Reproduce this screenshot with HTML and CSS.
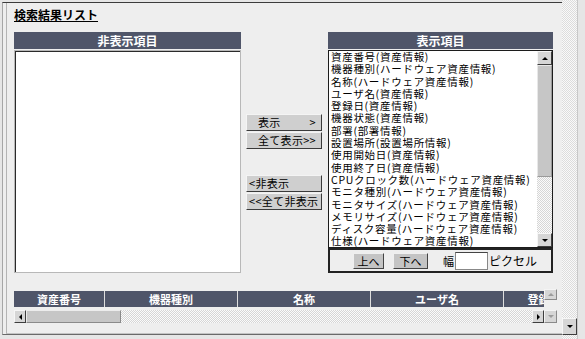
FILE: index.html
```html
<!DOCTYPE html>
<html>
    <head>
        <meta charset="utf-8">
        <title>検索結果リスト</title>
        <link rel="stylesheet" href="styles.css">
    </head>
    <body>
        <div class="page">
            <div class="frame">
                <div class="inner">
                    <h1 class="title">検索結果リスト</h1>
                    <div class="picker">
                        <div class="panel panel-left">
                            <div class="panel-head">非表示項目</div>
                            <div class="listbox listbox-hidden"></div>
                        </div>
                        <div class="moves">
                            <div class="btn-group">
                                <div class="btn btn-show"><span>表示</span><span>&gt;</span></div>
                                <div class="btn btn-show-all">全て表示&gt;&gt;</div>
                            </div>
                            <div class="btn-group">
                                <div class="btn btn-hide">&lt;非表示</div>
                                <div class="btn btn-hide">&lt;&lt;全て非表示</div>
                            </div>
                        </div>
                        <div class="panel panel-right">
                            <div class="panel-head">表示項目</div>
                            <div class="listbox listbox-shown">
                                <ul class="items">
                                    <li>資産番号(資産情報)</li>
                                    <li>機器種別(ハードウェア資産情報)</li>
                                    <li>名称(ハードウェア資産情報)</li>
                                    <li>ユーザ名(資産情報)</li>
                                    <li>登録日(資産情報)</li>
                                    <li>機器状態(資産情報)</li>
                                    <li>部署(部署情報)</li>
                                    <li>設置場所(設置場所情報)</li>
                                    <li>使用開始日(資産情報)</li>
                                    <li>使用終了日(資産情報)</li>
                                    <li>CPUクロック数(ハードウェア資産情報)</li>
                                    <li>モニタ種別(ハードウェア資産情報)</li>
                                    <li>モニタサイズ(ハードウェア資産情報)</li>
                                    <li>メモリサイズ(ハードウェア資産情報)</li>
                                    <li>ディスク容量(ハードウェア資産情報)</li>
                                    <li>仕様(ハードウェア資産情報)</li>
                                </ul>
                                <div class="vscroll">
                                    <div class="sb-btn"><i class="tri tri-up"></i></div>
                                    <div class="sb-thumb"></div>
                                    <div class="sb-track"></div>
                                    <div class="sb-btn"><i class="tri tri-down"></i></div>
                                </div>
                            </div>
                            <div class="order-bar">
                                <div class="small-btn btn-up">上へ</div>
                                <div class="small-btn btn-down">下へ</div>
                                <label class="width-label">幅</label>
                                <input type="text" class="width-input">
                                <span class="unit">ピクセル</span>
                            </div>
                        </div>
                    </div>
                    <div class="grid">
                        <div class="grid-main">
                            <div class="grid-head">
                                <div class="cell c1">資産番号</div>
                                <div class="cell c2">機器種別</div>
                                <div class="cell c3">名称</div>
                                <div class="cell c4">ユーザ名</div>
                                <div class="cell c5">登録日</div>
                            </div>
                            <div class="hscroll">
                                <div class="sb-btn sb-h"><i class="tri tri-left"></i></div>
                                <div class="sb-thumb-h"></div>
                                <div class="sb-track"></div>
                                <div class="sb-btn sb-h"><i class="tri tri-right"></i></div>
                            </div>
                        </div>
                        <div class="grid-vscroll">
                            <div class="sb-btn sb-off sb-up-small"><i class="tri tri-up"></i></div>
                            <div class="sb-btn sb-off sb-down-small"><i class="tri tri-down"></i></div>
                        </div>
                    </div>
                </div>
            </div>
            <div class="page-vscroll">
                <div class="sb-btn page-down"><i class="tri tri-down"></i></div>
            </div>
        </div>
    </body>
</html>
```

FILE: styles.css
```css
*{
    margin: 0;
    padding: 0;
    box-sizing: border-box;
}
body{
    background: #e6e6e6;
    font-family: "Noto Sans CJK JP", sans-serif;
    font-size: 11px;
    color: #000;
    overflow: hidden;
}
.page{
    display: flex;
    height: 339px;
}
.frame{
    width: 560px;
    height: 333px;
    margin: 2px 0 0 2px;
    padding-left: 3px;
    background: #eeeeee;
    border-top: 1px solid #3c3c3c;
    border-left: 1px solid #a6a6a6;
    border-bottom: 1px solid #6a6a6a;
}
.inner{
    height: 100%;
    padding: 5px 0 0 7px;
    border-left: 1px solid #b4b4b4;
    border-bottom: 1px solid #c4c4c4;
}
.title{
    font-size: 12px;
    font-weight: bold;
    line-height: 14px;
    text-decoration: underline;
}

/* 項目選択 */
.picker{
    display: flex;
    margin-top: 10px;
    height: 241px;
}
.panel-left{
    width: 227px;
}
.panel-right{
    width: 225px;
}
.panel-head{
    height: 17px;
    line-height: 17px;
    text-align: center;
    background: #4f5569;
    color: #fff;
    font-size: 12px;
    font-weight: bold;
}
.listbox{
    margin-top: 1px;
    background: #fff;
}
.listbox-hidden{
    height: 223px;
    border: 1px solid #b8b8b8;
    box-shadow: inset 1px 1px 0 #2a2a2a;
}
.listbox-shown{
    height: 198px;
    border: 1px solid #1c1c1c;
    display: flex;
}
.items{
    flex: 1;
    list-style: none;
    padding-left: 2px;
    font-size: 10.5px;
    line-height: 12.3px;
    letter-spacing: 0.7px;
    white-space: nowrap;
}
.vscroll{
    width: 15px;
    display: flex;
    flex-direction: column;
}
.sb-btn{
    display: flex;
    align-items: center;
    justify-content: center;
    width: 15px;
    height: 14px;
    background: #d6d6d6;
    border: 1px solid;
    border-color: #f6f6f6 #3e3e3e #3e3e3e #f6f6f6;
}
.sb-thumb{
    height: 112px;
    background: #c6c6c6;
    border: 1px solid;
    border-color: #e8e8e8 #9a9a9a #9a9a9a #e8e8e8;
}
.sb-track{
    flex: 1;
    background-image: repeating-conic-gradient(#fbfbfb 0 25%, #d6d6d6 0 50%);
    background-size: 2px 2px;
}
.tri{
    display: block;
    width: 0;
    height: 0;
}
.tri-up{
    border-left: 3px solid transparent;
    border-right: 3px solid transparent;
    border-bottom: 3px solid #000;
}
.tri-down{
    border-left: 3px solid transparent;
    border-right: 3px solid transparent;
    border-top: 3px solid #000;
}
.tri-left{
    border-top: 3px solid transparent;
    border-bottom: 3px solid transparent;
    border-right: 3px solid #000;
}
.tri-right{
    border-top: 3px solid transparent;
    border-bottom: 3px solid transparent;
    border-left: 3px solid #000;
}
.sb-off .tri-up{
    border-bottom-color: #9c9c9c;
}
.sb-off .tri-down{
    border-top-color: #9c9c9c;
}

/* 移動ボタン */
.moves{
    width: 87px;
    padding: 82px 0 0 5px;
}
.btn{
    width: 76px;
    height: 17px;
    line-height: 15px;
    background: #cfcfcf;
    border: 1px solid;
    border-color: #f4f4f4 #3a3a3a #3a3a3a #f4f4f4;
    white-space: nowrap;
    letter-spacing: 0.3px;
}
.btn + .btn{
    margin-top: 1px;
}
.btn-group + .btn-group{
    margin-top: 26px;
}
.btn-show{
    display: flex;
    justify-content: space-between;
    padding: 0 5px 0 11px;
}
.btn-show-all{
    padding-left: 11px;
}
.btn-hide{
    padding-left: 2px;
}

/* 並び替え */
.order-bar{
    height: 25px;
    border: 2px solid #222;
    display: flex;
    align-items: center;
    padding-left: 23px;
}
.small-btn{
    height: 16px;
    line-height: 14px;
    text-align: center;
    background: #c4c4c4;
    border: 1px solid;
    border-color: #efefef #444 #444 #efefef;
}
.btn-up{
    width: 31px;
}
.btn-down{
    width: 35px;
    margin-left: 9px;
}
.width-label{
    margin-left: 15px;
}
.width-input{
    width: 33px;
    height: 18px;
    margin-left: 1px;
    border: 1px solid #888;
    border-top-color: #444;
    background: #fff;
}
.unit{
    margin-left: 1px;
    font-size: 12px;
}

/* 一覧 */
.grid{
    display: flex;
    margin-top: 18px;
}
.grid-main{
    width: 530px;
}
.grid-head{
    display: flex;
    gap: 1px;
    height: 16px;
    overflow: hidden;
    background: #dedede;
}
.cell{
    flex: none;
    line-height: 16px;
    text-align: center;
    background: #4f5569;
    color: #fff;
    font-weight: bold;
    white-space: nowrap;
}
.c1{ width: 90px; }
.c2{ width: 132px; }
.c3{ width: 132px; }
.c4{ width: 132px; }
.c5{ width: 80px; }
.hscroll{
    display: flex;
    height: 13px;
    margin-top: 3px;
}
.sb-h{
    width: 12px;
    height: 13px;
}
.sb-thumb-h{
    width: 95px;
    background: #c6c6c6;
    border: 1px solid;
    border-color: #ececec #8a8a8a #8a8a8a #ececec;
}
.grid-vscroll{
    width: 13px;
    margin-top: -2px;
}
.grid-vscroll .sb-btn{
    width: 13px;
    border-color: #f4f4f4 #8a8a8a #8a8a8a #f4f4f4;
}
.sb-up-small{
    height: 11px !important;
}
.sb-down-small{
    height: 13px !important;
    margin-top: 10px;
}

/* ページのスクロールバー */
.page-vscroll{
    width: 16px;
    display: flex;
    flex-direction: column;
    justify-content: flex-end;
    padding-bottom: 4px;
    background-image: repeating-conic-gradient(#f9f9f9 0 25%, #dcdcdc 0 50%);
    background-size: 2px 2px;
    border-right: 1px solid #c8c8c8;
}
.page-down{
    width: 15px;
    height: 17px;
}
```
